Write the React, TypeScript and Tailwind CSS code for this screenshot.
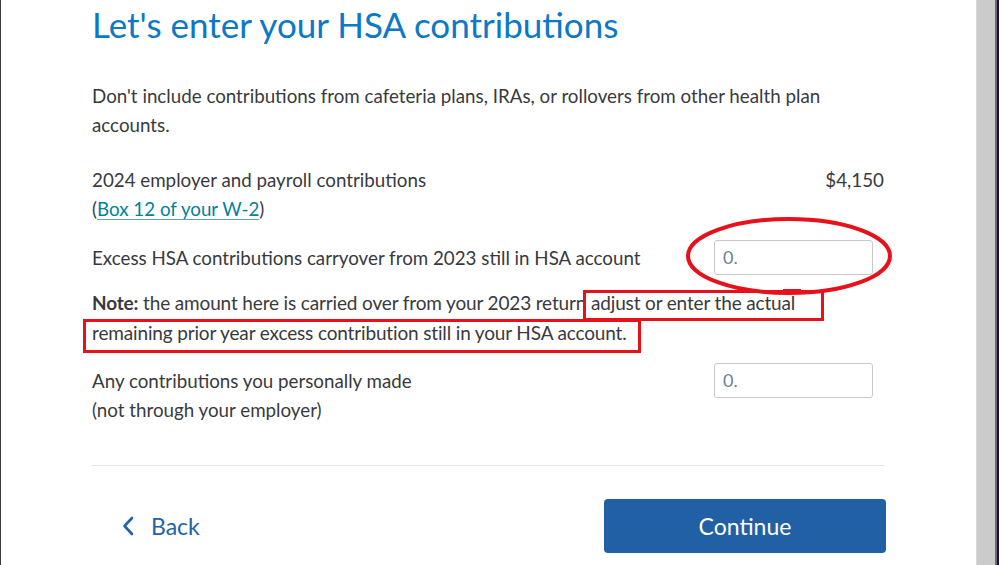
const font = { fontFamily: 'Lato, "Open Sans", sans-serif' }

function AmountInput() {
  return (
    <div className="flex h-[35px] w-[159px] items-center rounded-[3px] border border-[#c9c9c9] bg-white pl-[8px] text-[18px] text-[#6f7f95]">
      0.
    </div>
  )
}

function Annotations() {
  return (
    <svg className="pointer-events-none absolute left-0 top-0" width="999" height="565" viewBox="0 0 999 565" fill="none">
      <ellipse cx="789" cy="256" rx="101" ry="37" stroke="#e8101a" strokeWidth="4" />
      <rect x="584.5" y="291.5" width="238" height="28" stroke="#e8101a" strokeWidth="3" />
      <rect x="84.5" y="320.5" width="555" height="31" stroke="#e8101a" strokeWidth="3" />
      <rect x="783" y="289" width="18" height="4" fill="#e8101a" />
    </svg>
  )
}

export default function App() {
  return (
    <div className="relative flex h-[565px] w-[999px] overflow-hidden bg-white" style={font}>
      <div className="w-px bg-[#3a3a3a]" />
      <main className="flex flex-1 flex-col pl-[91px] pr-[92px] text-[#393a3d]">
        <h1 className="mt-[4px] text-[35px] font-normal leading-[40px] text-[#0b78c8]">
          Let's enter your HSA contributions
        </h1>

        <p className="mt-[37px] text-[18.75px] leading-[29px]">
          Don't include contributions from cafeteria plans, IRAs, or rollovers from other health plan
          <br />
          accounts.
        </p>

        <div className="mt-[26px] flex items-start justify-between text-[18.75px] leading-[29px]">
          <div>
            <div>2024 employer and payroll contributions</div>
            <div>
              (<a className="text-[#00829b] underline decoration-[#5aa7b8] underline-offset-[3px]">Box 12 of your W-2</a>)
            </div>
          </div>
          <div>$4,150</div>
        </div>

        <div className="mt-[17px] flex items-center justify-between text-[18.75px] leading-[29px]">
          <div>Excess HSA contributions carryover from 2023 still in HSA account</div>
          <div className="mr-[11px]">
            <AmountInput />
          </div>
        </div>

        <p className="mt-[13px] text-[19px] leading-[30px] tracking-[-0.15px]">
          <span className="font-bold">Note:</span> the amount here is carried over from your 2023 return adjust or enter the actual
          <br />
          remaining prior year excess contribution still in your HSA account.
        </p>

        <div className="mt-[18px] flex items-start justify-between text-[18.75px] leading-[29px]">
          <div>
            <div>Any contributions you personally made</div>
            <div>(not through your employer)</div>
          </div>
          <div className="mr-[11px] -mt-[3px]">
            <AmountInput />
          </div>
        </div>

        <div className="mt-[41px] h-px bg-[#e6e6e6]" />

        <div className="mt-[33px] flex items-center justify-between">
          <button className="ml-[30px] flex items-center gap-[17px] text-[23px] text-[#2262a6]">
            <svg width="12" height="20" viewBox="0 0 12 20" fill="none">
              <path d="M10 2 L2.5 10 L10 18" stroke="#2262a6" strokeWidth="2.6" strokeLinecap="round" strokeLinejoin="round" />
            </svg>
            Back
          </button>
          <button className="-mr-[2px] h-[54px] w-[282px] rounded-[4px] bg-[#2160a4] text-[23px] text-white">
            Continue
          </button>
        </div>
      </main>
      <div className="w-[19px] border-l border-[#d8d8d8] bg-[#cbcbcb]" />
      <div className="w-[2px] bg-[#6a6a6a]" />
      <div className="w-[2px] bg-[#1d0b3a]" />
      <Annotations />
    </div>
  )
}
